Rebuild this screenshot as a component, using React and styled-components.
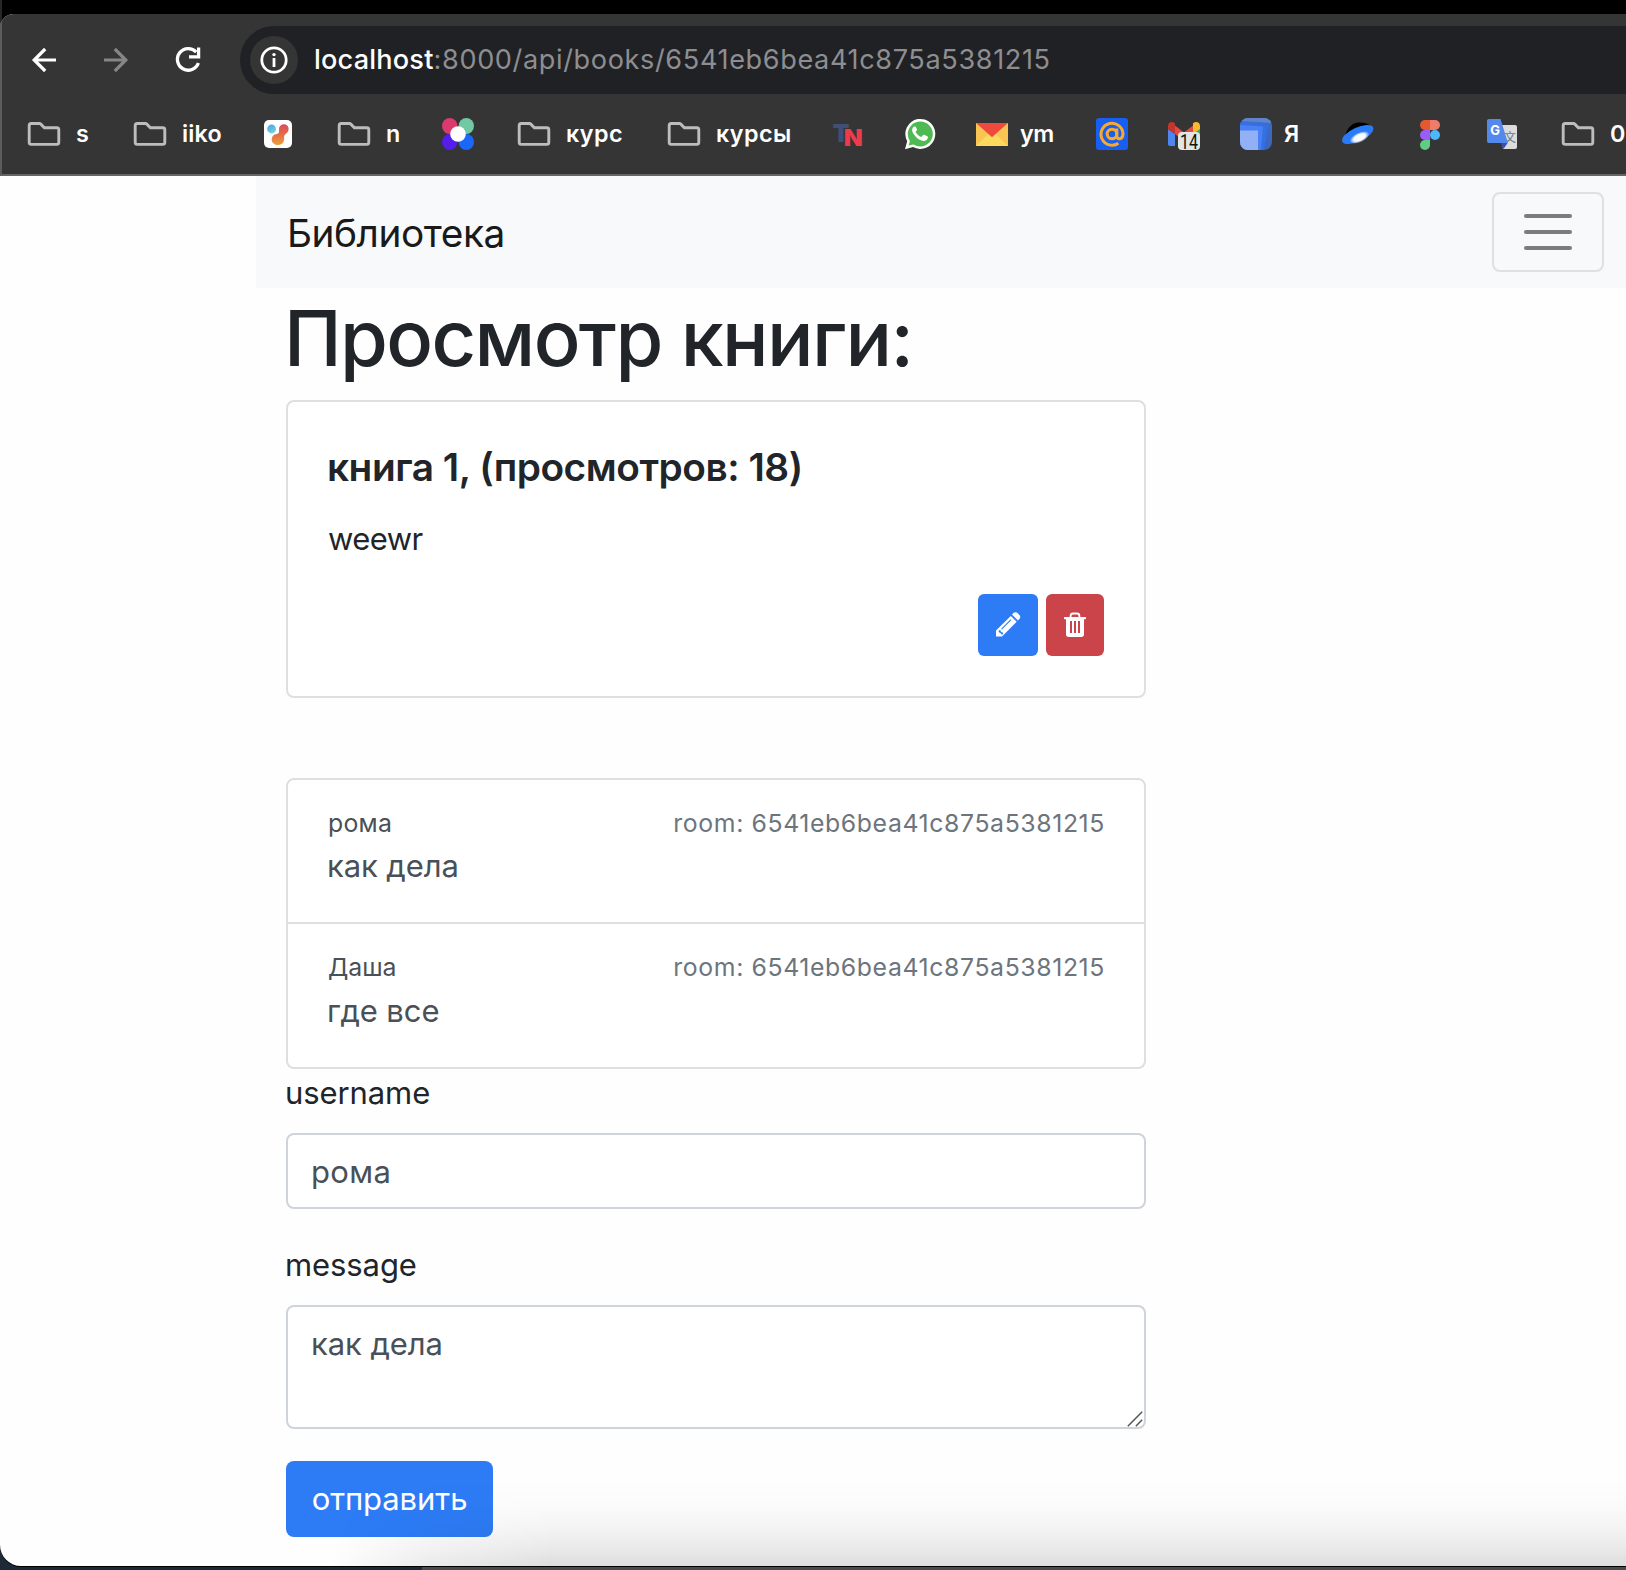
import React from 'react';
import styled, { createGlobalStyle } from 'styled-components';

const GlobalStyle = createGlobalStyle`
  *, *::before, *::after { box-sizing: border-box; }
  html, body { margin: 0; padding: 0; background: #000; }
  body {
    font-family: Inter, Roboto, "Liberation Sans", sans-serif;
    color: #212529;
    overflow: hidden;
  }
`;

/* ---------- desktop and window ---------- */

const Desktop = styled.div`
  width: 1626px;
  height: 1570px;
  padding-top: 14px;
  overflow: hidden;
  display: flex;
  flex-direction: column;
  background:
    linear-gradient(90deg, #1d2a36 0 422px, #4a4a4a 422px 100%) 0 100% / 100% 3px no-repeat,
    linear-gradient(90deg, #1d2a36, #1d2a36) 0 100% / 24px 40px no-repeat,
    linear-gradient(90deg, #262626, #262626) 0 0 / 2px 30px no-repeat,
    #000;
`;

const Window = styled.div`
  height: 1552px;
  flex: none;
  display: flex;
  flex-direction: column;
  border-radius: 14px 0 0 21px;
  overflow: hidden;
  background: #fefefe;
  box-shadow: 0 1px 0 #000;
`;

/* ---------- browser chrome ---------- */

const Chrome = styled.header`
  flex: none;
  background: #353535;
  border-left: 2px solid #5c5c5c;
  border-bottom: 2px solid #666464;
  height: 162px;
`;

const Toolbar = styled.div`
  display: flex;
  align-items: center;
  padding: 12px 0 0 26px;
  height: 80px;
`;

const NavButton = styled.button`
  width: 32px;
  height: 32px;
  margin-right: 40px;
  padding: 0;
  border: 0;
  background: none;
  color: ${(p) => (p.$muted ? '#868686' : '#fff')};
  svg { display: block; }
`;

const AddressBar = styled.div`
  flex: 1;
  height: 68px;
  margin-left: -4px;
  padding-left: 10px;
  display: flex;
  align-items: center;
  background: #202124;
  border-radius: 34px 0 0 34px;
`;

const InfoBadge = styled.span`
  width: 48px;
  height: 48px;
  margin-right: 16px;
  border-radius: 50%;
  background: #353535;
  svg { display: block; }
`;

const Url = styled.span`
  font-size: 27.1px;
  line-height: 68px;
  letter-spacing: 0.626px;
  color: #8e8e91;
  white-space: nowrap;
`;

const Host = styled.span`
  font-weight: 500;
  letter-spacing: 0.2px;
  color: #fff;
`;

const Bookmarks = styled.nav`
  height: 80px;
  display: flex;
  align-items: center;
  gap: 40px;
  padding-left: 22px;
  overflow: hidden;
`;

const Bookmark = styled.a`
  flex: none;
  display: flex;
  align-items: center;
  svg { display: block; overflow: visible; margin-left: ${(p) => (p.$folder ? 4 : 0)}px; }
`;

const BookmarkLabel = styled.span`
  width: ${(p) => p.$w}px;
  margin-left: ${(p) => p.$gap}px;
  font-size: 23.3px;
  font-weight: 600;
  line-height: 32px;
  letter-spacing: ${(p) => p.$ls || 0}px;
  color: #fff;
  white-space: nowrap;
`;

/* ---------- page ---------- */

const Page = styled.div`
  flex: 1;
  position: relative;
  padding-left: 256px;
`;

const Navbar = styled.nav`
  height: 112px;
  padding: 0 22px 0 32px;
  display: flex;
  align-items: center;
  justify-content: space-between;
  background: #f8f9fb;
`;

const Brand = styled.a`
  padding-top: 2px;
  margin-left: -1px;
  font-size: 38.8px;
  line-height: 60px;
  letter-spacing: -0.453px;
  color: #1a1a1a;
`;

const Toggler = styled.button`
  width: 112px;
  height: 80px;
  padding: 0;
  display: flex;
  flex-direction: column;
  align-items: center;
  justify-content: center;
  gap: 12px;
  border: 2px solid #dfe0e2;
  border-radius: 8px;
  background: none;
`;

const TogglerBar = styled.span`
  width: 48px;
  height: 4px;
  border-radius: 2px;
  background: #7c7c7d;
`;

const Column = styled.main`
  width: 860px;
  margin-left: 30px;
`;

const Heading = styled.h1`
  margin: 0 0 16px -2px;
  padding-top: 4px;
  font-size: 77.5px;
  font-weight: 500;
  line-height: 92px;
  letter-spacing: -1.654px;
  white-space: nowrap;
`;

const Card = styled.section`
  border: 2px solid #dfdfdf;
  border-radius: 8px;
  background: #fff;
`;

const BookCard = styled(Card)`
  height: 298px;
  padding: 40px;
  margin-bottom: 80px;
`;

const CardTitle = styled.h5`
  margin: 0 0 24px -1px;
  padding-top: 2px;
  font-size: 38.8px;
  font-weight: 600;
  line-height: 46px;
  letter-spacing: -0.465px;
`;

const CardText = styled.p`
  margin: 0 0 32px;
  padding-top: 1px;
  font-size: 31px;
  line-height: 47px;
  letter-spacing: -0.566px;
`;

const Actions = styled.div`
  display: flex;
  justify-content: flex-end;
  gap: 8px;
`;

const IconButton = styled.button`
  width: ${(p) => p.$w}px;
  height: 62px;
  padding: 0;
  display: flex;
  align-items: center;
  justify-content: center;
  border: 0;
  border-radius: 6px;
  background: ${(p) => p.$bg};
  svg { display: block; }
`;

const Message = styled.article`
  height: 142.4px;
  padding: 24px 40px 0;
  color: #495057;
  & + & { height: 144.4px; border-top: 2px solid #dfdfdf; }
`;

const MessageHead = styled.div`
  display: flex;
  justify-content: space-between;
  font-size: 24.8px;
  line-height: 38.4px;
`;

const Author = styled.span`
  letter-spacing: ${(p) => p.$ls}px;
`;

const Room = styled.span`
  color: #6c757d;
  letter-spacing: 0.609px;
  margin-right: -1px;
`;

const MessageText = styled.p`
  margin: 0 0 0 -1px;
  font-size: 31px;
  line-height: 48px;
  letter-spacing: -0.1px;
`;

const Field = styled.div`
  margin-bottom: 32px;
`;

const Label = styled.label`
  display: block;
  height: 48px;
  margin: 0 0 16px -1px;
  font-size: 31px;
  line-height: 48px;
  letter-spacing: -0.09px;
`;

const controlStyles = `
  display: block;
  width: 100%;
  margin: 0;
  border: 2px solid #ced4da;
  border-radius: 8px;
  background: #fff;
  outline: none;
  color: #495057;
  font: 400 31px/48px Inter, Roboto, "Liberation Sans", sans-serif;
`;

const TextInput = styled.input`
  ${controlStyles}
  height: 76px;
  padding: 13px 23px 11px;
  letter-spacing: 0.353px;
`;

const AreaWrap = styled.div`
  position: relative;
`;

const TextArea = styled.textarea`
  ${controlStyles}
  height: 124px;
  padding: 13px 23px 11px;
  letter-spacing: -0.086px;
  resize: none;
  overflow: hidden;
`;

const Grip = styled.svg`
  position: absolute;
  right: 3px;
  bottom: 2px;
`;

const Submit = styled.button`
  width: 207px;
  height: 76px;
  padding: 0;
  border: 0;
  border-radius: 8px;
  background: #2d7cf6;
  color: #fff;
  font: 400 31px/76px Inter, Roboto, "Liberation Sans", sans-serif;
  letter-spacing: -0.087px;
`;

const BottomShade = styled.div`
  position: absolute;
  left: 0;
  right: 0;
  bottom: 0;
  height: 86px;
  pointer-events: none;
  background: linear-gradient(
    180deg,
    rgba(0, 0, 0, 0) 0%,
    rgba(0, 0, 0, 0.012) 28%,
    rgba(0, 0, 0, 0.04) 55%,
    rgba(0, 0, 0, 0.085) 82%,
    rgba(0, 0, 0, 0.13) 100%
  );
  mask-image: linear-gradient(100deg, transparent 340px, rgba(0, 0, 0, 0.6) 440px, #000 560px);
`;

/* ---------- icons ---------- */

const BackIcon = () => (
  <svg width="32" height="32" viewBox="0 0 32 32" fill="none" stroke="currentColor" strokeWidth="3.2">
    <path d="M28 16H6.5M17.2 5 6.2 16l11 11" />
  </svg>
);

const ForwardIcon = () => (
  <svg width="32" height="32" viewBox="0 0 32 32" fill="none" stroke="currentColor" strokeWidth="3.2">
    <path d="M4 16h21.5M14.8 5l11 11-11 11" />
  </svg>
);

const ReloadIcon = () => (
  <svg width="32" height="32" viewBox="0 0 32 32" fill="none" stroke="currentColor" strokeWidth="3.3">
    <path d="M24.3 8.2A10.8 10.8 0 1 0 26.4 19" />
    <path d="M26.6 3.4v9.4H17" />
  </svg>
);

const InfoIcon = () => (
  <svg width="48" height="48" viewBox="0 0 48 48">
    <circle cx="24" cy="24" r="12.2" fill="none" stroke="#fff" strokeWidth="2.8" />
    <circle cx="24" cy="18.6" r="1.7" fill="#fff" />
    <rect x="22.6" y="22" width="2.8" height="9" fill="#fff" />
  </svg>
);

const FolderIcon = () => (
  <svg width="32" height="32" viewBox="0 0 32 32">
    <path
      d="M3.2 5.5h8.2c.6 0 1 .2 1.4.6l3.6 3.6h12.4c1.3 0 2 .8 2 2v12.6c0 1.3-.7 2.1-2 2.1H3.2c-1.3 0-2-.8-2-2.1V7.6c0-1.3.7-2.1 2-2.1z"
      fill="none"
      stroke="#bdbdbd"
      strokeWidth="2.9"
    />
  </svg>
);

const BlobIcon = () => (
  <svg width="32" height="32" viewBox="0 0 32 32">
    <defs>
      <linearGradient id="blobWarm" x1="0" y1="0" x2="0" y2="1">
        <stop offset="0" stopColor="#dd4a5c" />
        <stop offset="0.55" stopColor="#e07448" />
        <stop offset="1" stopColor="#f29b38" />
      </linearGradient>
      <linearGradient id="blobCool" x1="0" y1="0" x2="0.5" y2="1">
        <stop offset="0" stopColor="#4a9fe6" />
        <stop offset="1" stopColor="#6fd3da" />
      </linearGradient>
    </defs>
    <rect x="2" y="2" width="28" height="28" rx="5" fill="#fff" />
    <circle cx="9.6" cy="11" r="4.4" fill="url(#blobCool)" />
    <path
      d="M17.2 9.6c.8-3 3.9-4.1 6.3-3.1 3 1.2 3.9 4.6 2.5 7.1-1.2 2.1-2.8 2.2-3.6 4-.7 1.6.2 3-.6 5.3-.9 2.8-3.8 4.5-6.9 4-3.7-.6-6-3.9-5-7 .9-2.9 3.4-3.7 5.6-4.1 2.5-.5 1.1-3.8 1.7-6.2z"
      fill="url(#blobWarm)"
    />
  </svg>
);

const FlowerIcon = () => (
  <svg width="32" height="32" viewBox="0 0 32 32">
    <ellipse cx="7.7" cy="8" rx="7.7" ry="8" fill="#db3a6f" />
    <ellipse cx="24.3" cy="8" rx="7.7" ry="8" fill="#70c9a3" />
    <ellipse cx="7.7" cy="24" rx="7.7" ry="8" fill="#541eea" />
    <ellipse cx="24.3" cy="24" rx="7.7" ry="8" fill="#1b68f8" />
    <circle cx="16" cy="16" r="7.8" fill="#fff" />
  </svg>
);

const TnIcon = () => (
  <svg width="32" height="32" viewBox="0 0 32 32" fontFamily="Inter, sans-serif" fontWeight="900">
    <text x="0.5" y="23.6" fontSize="25" fill="#3f4f76" textLength="17" lengthAdjust="spacingAndGlyphs">T</text>
    <text x="11.8" y="27.6" fontSize="23.5" fill="#ee3a4a" textLength="19" lengthAdjust="spacingAndGlyphs">N</text>
  </svg>
);

const WhatsappIcon = () => (
  <svg width="32" height="32" viewBox="0 0 32 32">
    <path d="M1 31.2l2.2-8A15 15 0 1 1 9 29z" fill="#fff" />
    <circle cx="16.3" cy="16" r="12.5" fill="#4fba52" />
    <path d="M4.6 27.6l1.5-5.4 4 4z" fill="#4fba52" />
    <path
      transform="translate(6.4 25.8) scale(.8) rotate(-90) translate(0 0)"
      d="M0 0"
    />
    <path
      d="M12 9.3c-.4-.8-.8-.8-1.3-.8-1.2 0-2.6 1.5-2.6 3.6 0 2.4 1.9 4.8 3.5 6.4 2.6 2.9 5.4 4.4 8 4.4 2.3 0 4.2-1.5 4.3-3.4.1-.9-.1-1-.7-1.3l-3-1.4c-.5-.2-.8-.2-1.1.2l-1.3 1.6c-.3.3-.5.4-1 .2-2.4-1-4.100-2.700-5.100-4.500-.2-.4-.1-.6.2-.9l.9-1.100c.3-.4.3-.6.1-1z"
      fill="#fff"
    />
  </svg>
);

const MailIcon = () => (
  <svg width="32" height="32" viewBox="0 0 32 32">
    <rect x="0" y="5" width="32" height="23" fill="#f8c553" />
    <path d="M0 28l12.500-12h7L32 28z" fill="#fbda5c" />
    <path d="M0 5h32L16 19.300z" fill="#ef4a3e" />
  </svg>
);

const AtIcon = () => (
  <svg width="32" height="32" viewBox="0 0 32 32" fill="none" stroke="#fba92d" strokeWidth="3">
    <rect width="32" height="32" rx="3" fill="#165ff0" stroke="none" />
    <circle cx="16" cy="16" r="4.800" />
    <path d="M20.800 10.500v7.500c0 4 6.200 4 6.200-2a11 11 0 1 0-4.600 9.200" />
  </svg>
);

const GmailIcon = () => (
  <svg width="32" height="32" viewBox="0 0 32 32">
    <path d="M0 11l7 5v12H2c-1.300 0-2-.8-2-2z" fill="#4c86ee" />
    <path d="M25 10h7v10h-7z" fill="#3aa757" />
    <path d="M7 7.500l9 7 9-7v8.500l-9 7-9-7z" fill="#e24b3f" />
    <path d="M0 8c0-4 4-5 7-2.700V16L0 11z" fill="#c5352b" />
    <path d="M32 8c0-4-4-5-7-2.700V16l7-5z" fill="#f7bb31" />
    <rect x="10" y="14" width="22" height="18" rx="4" fill="#e2e5e0" />
    <text x="21" y="30.500" textAnchor="middle" fontFamily="Roboto, sans-serif" fontSize="20" fill="#111" textLength="18" lengthAdjust="spacingAndGlyphs">14</text>
  </svg>
);

const SquaresIcon = () => (
  <svg width="32" height="32" viewBox="0 0 32 32">
    <defs>
      <clipPath id="squaresClip"><rect width="32" height="32" rx="8" /></clipPath>
      <linearGradient id="squaresBack" x1="0" y1="0" x2="1" y2="1">
        <stop offset="0" stopColor="#3f74d8" />
        <stop offset="1" stopColor="#3b63b8" />
      </linearGradient>
    </defs>
    <g clipPath="url(#squaresClip)">
      <rect width="32" height="32" fill="url(#squaresBack)" />
      <path d="M4 0h28v5L2 3z" fill="#5f86cc" />
      <path d="M0 4l28 3-4 25H0z" fill="#346fe6" />
      <path d="M0 7l23 1.500L21 32H0z" fill="#4a80f5" />
      <rect x="0" y="12.500" width="18" height="20" fill="#91b0f6" />
    </g>
  </svg>
);

const SaucerIcon = () => (
  <svg width="32" height="32" viewBox="0 0 32 32">
    <defs>
      <radialGradient id="saucerGlow">
        <stop offset="0" stopColor="#fff" />
        <stop offset="0.600" stopColor="#f3f8ff" />
        <stop offset="1" stopColor="#fff" stopOpacity="0" />
      </radialGradient>
    </defs>
    <path d="M3 19c1-7 6-14 13-14.500 5-.3 10 1 12 3z" fill="#000" />
    <ellipse cx="15.700" cy="16.500" rx="17" ry="7" transform="rotate(-25 15.700 16.500)" fill="#2a7bfa" />
    <ellipse cx="17.500" cy="19.500" rx="10.500" ry="5" transform="rotate(-25 17.500 19.500)" fill="url(#saucerGlow)" />
  </svg>
);

const FigmaIcon = () => (
  <svg width="32" height="32" viewBox="0 0 32 32">
    <path d="M16 2h-5a5 5 0 0 0 0 10h5z" fill="#e5592f" />
    <path d="M16 2h5a5 5 0 0 1 0 10h-5z" fill="#f07b6a" />
    <path d="M16 12h-5a5 5 0 0 0 0 10h5z" fill="#9c5cf7" />
    <circle cx="21" cy="17" r="5" fill="#4db8f9" />
    <path d="M16 22h-5a5 5 0 1 0 5 5z" fill="#5fcd87" />
  </svg>
);

const TranslateIcon = () => (
  <svg width="32" height="32" viewBox="0 0 32 32">
    <path d="M13 7h16c1.300 0 2 .7 2 2v20c0 1.300-.7 2-2 2H17z" fill="#dcdcdc" />
    <text x="18" y="24" fontFamily="Noto Sans CJK SC, sans-serif" fontSize="12" fill="#607d8b">文</text>
    <path d="M14.500 24.500H22L17.500 31z" fill="#3a4cb5" />
    <path d="M3 1h11.500L22 25H3c-1.300 0-2-.7-2-2V3c0-1.300.7-2 2-2z" fill="#5489ec" />
    <text x="4.300" y="17.200" fontFamily="Inter, sans-serif" fontWeight="700" fontSize="13" fill="#fff">G</text>
  </svg>
);

const PencilIcon = () => (
  <svg width="26" height="26" viewBox="0 0 26 26">
    <path d="M17 2.600l1.500-1.500c1.200-1.200 2.800-1.200 4 0l1.900 1.900c1.200 1.200 1.200 2.800 0 4L22.900 8.500z" fill="#fff" />
    <path d="M15.800 3.900l5.900 5.900L7 24.600H1v-6z" fill="#fff" />
    <path d="M6.500 17.200L16 7.700" stroke="#2d7cf6" strokeWidth="1.100" />
    <path d="M3.600 18.600l1.700-.6.600 1.800 1.800.600.600 1.600-1.500.700-1.300-1.600-1.600-.900z" fill="#2d7cf6" />
  </svg>
);

const TrashIcon = () => (
  <svg width="24" height="26" viewBox="0 0 24 26">
    <path d="M7.600 5.200V4c0-1.700 1-2.500 2.500-2.500h3.800c1.500 0 2.500.8 2.500 2.500v1.200" fill="none" stroke="#fff" strokeWidth="1.800" />
    <rect x="1" y="5" width="22" height="2.200" rx=".6" fill="#fff" />
    <path d="M3 7h18v15.300c0 1.700-1 2.700-2.700 2.700H5.700C4 25 3 24 3 22.300z" fill="#fff" />
    <path d="M8 9v12M12 9v12M16 9v12" stroke="#cb444a" strokeWidth="2" />
  </svg>
);

/* ---------- content ---------- */

const bookmarks = [
  { folder: true, label: 's', w: 14 },
  { folder: true, label: 'iiko', w: 40, ls: 0.19 },
  { icon: BlobIcon },
  { folder: true, label: 'n', w: 16 },
  { icon: FlowerIcon },
  { folder: true, label: 'курс', w: 58, ls: 0.46 },
  { folder: true, label: 'курсы', w: 76, ls: 0.45 },
  { icon: TnIcon },
  { icon: WhatsappIcon },
  { icon: MailIcon, label: 'ym', w: 36, ls: -0.5 },
  { icon: AtIcon },
  { icon: GmailIcon },
  { icon: SquaresIcon, label: 'Я', w: 18 },
  { icon: SaucerIcon },
  { icon: FigmaIcon },
  { icon: TranslateIcon },
  { folder: true, label: '0', w: 20 },
];

const messages = [
  { author: 'рома', ls: 0.285, text: 'как дела' },
  { author: 'Даша', ls: -0.044, text: 'где все' },
];

export default function App() {
  return (
    <Desktop>
      <GlobalStyle />
      <Window>
        <Chrome>
          <Toolbar>
            <NavButton aria-label="Back"><BackIcon /></NavButton>
            <NavButton aria-label="Forward" $muted><ForwardIcon /></NavButton>
            <NavButton aria-label="Reload"><ReloadIcon /></NavButton>
            <AddressBar>
              <InfoBadge><InfoIcon /></InfoBadge>
              <Url><Host>localhost</Host>:8000/api/books/6541eb6bea41c875a5381215</Url>
            </AddressBar>
          </Toolbar>
          <Bookmarks>
            {bookmarks.map(({ folder, icon, label, w, ls }, i) => {
              const Icon = folder ? FolderIcon : icon;
              return (
                <Bookmark key={i} $folder={folder}>
                  <Icon />
                  {label && (
                    <BookmarkLabel $w={w} $ls={ls} $gap={folder ? 16 : 12}>{label}</BookmarkLabel>
                  )}
                </Bookmark>
              );
            })}
          </Bookmarks>
        </Chrome>
        <Page>
          <Navbar>
            <Brand>Библиотека</Brand>
            <Toggler aria-label="Menu">
              <TogglerBar /><TogglerBar /><TogglerBar />
            </Toggler>
          </Navbar>
          <Column>
            <Heading>Просмотр книги:</Heading>
            <BookCard>
              <CardTitle>книга 1, (просмотров: 18)</CardTitle>
              <CardText>weewr</CardText>
              <Actions>
                <IconButton $w={60} $bg="#2d7cf6" aria-label="Edit"><PencilIcon /></IconButton>
                <IconButton $w={58} $bg="#cb444a" aria-label="Delete"><TrashIcon /></IconButton>
              </Actions>
            </BookCard>
            <Card>
              {messages.map((m) => (
                <Message key={m.author}>
                  <MessageHead>
                    <Author $ls={m.ls}>{m.author}</Author>
                    <Room>room: 6541eb6bea41c875a5381215</Room>
                  </MessageHead>
                  <MessageText>{m.text}</MessageText>
                </Message>
              ))}
            </Card>
            <Field>
              <Label htmlFor="username">username</Label>
              <TextInput id="username" defaultValue="рома" />
            </Field>
            <Field>
              <Label htmlFor="message">message</Label>
              <AreaWrap>
                <TextArea id="message" defaultValue="как дела" />
                <Grip width="16" height="16" viewBox="0 0 16 16" stroke="#555" strokeWidth="1.5">
                  <path d="M.800 15.200L15.200.800M8.800 15.200L15.200 8.800" />
                </Grip>
              </AreaWrap>
            </Field>
            <Submit>отправить</Submit>
          </Column>
          <BottomShade />
        </Page>
      </Window>
    </Desktop>
  );
}
